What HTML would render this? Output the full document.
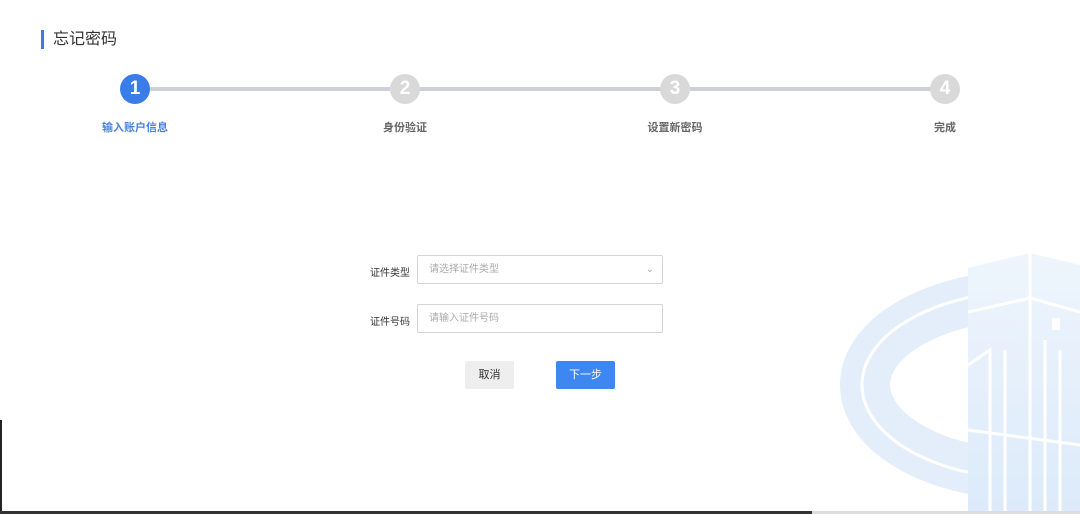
<!DOCTYPE html>
<html><head><meta charset="utf-8"><style>
*{margin:0;padding:0;box-sizing:border-box}
body{width:1080px;height:514px;background:#fff;position:relative;overflow:hidden;font-family:"Liberation Sans","Noto Sans CJK SC",sans-serif}
.a{position:absolute}
.title{left:41px;top:30px;font-size:16px;color:#333;line-height:19px;padding-left:9px;border-left:3px solid #3a7ce8}
.line{top:87px;height:4px;background:#cdd0d6}
.c{width:30px;height:30px;border-radius:50%;background:#d9d9d9;color:#fff;font-weight:bold;font-size:19px;text-align:center;line-height:30px;top:74px}
.lbl{top:119px;font-size:11px;color:#666;font-weight:bold;width:120px;text-align:center}
.fl{font-size:10px;color:#333}
.inp{border:1px solid #d5d5d5;width:246px;height:29px;left:417px;font-size:10px;color:#aaa;padding-left:11px;line-height:27px;border-radius:2px}
.btn{top:361px;height:28px;font-size:11px;text-align:center;line-height:28px;border-radius:2px}
</style></head><body>
<div class="a title">忘记密码</div>
<div class="a line" style="left:135px;width:810px"></div>
<div class="a c" style="left:120px;background:#3a7ce8">1</div>
<div class="a c" style="left:390px">2</div>
<div class="a c" style="left:660px">3</div>
<div class="a c" style="left:930px">4</div>
<div class="a lbl" style="left:75px;color:#4a82d8">输入账户信息</div>
<div class="a lbl" style="left:345px">身份验证</div>
<div class="a lbl" style="left:615px">设置新密码</div>
<div class="a lbl" style="left:885px">完成</div>
<svg class="a" style="left:780px;top:230px" width="300" height="284" viewBox="780 230 300 284">
<defs><linearGradient id="g" x1="0" y1="0" x2="0" y2="1"><stop offset="0" stop-color="#eef5fc"/><stop offset="1" stop-color="#dceafa"/></linearGradient></defs>
<ellipse cx="1030" cy="385" rx="165" ry="90" fill="none" stroke="#e4eefa" stroke-width="50"/>
<ellipse cx="1030" cy="385" rx="168" ry="94" fill="none" stroke="#fff" stroke-width="3"/>
<path d="M968 268 L1030 253 L1080 265 L1080 514 L968 514 Z" fill="url(#g)"/>
<path d="M968 312 L1030 298 L1080 312 M1030 253 L1030 514 M968 365 L990 350 L990 514 M1005 350 L1005 514 M1045 340 L1045 514 M1060 350 L1060 514 M968 430 L1080 445" fill="none" stroke="#fff" stroke-width="3"/>
<rect x="1052" y="318" width="8" height="12" fill="#fff"/>
</svg>
<div class="a fl" style="left:370px;top:264px">证件类型</div>
<div class="a inp" style="top:255px">请选择证件类型<span style="position:absolute;right:8px;top:0;color:#aaa;font-size:10px">&#8964;</span></div>
<div class="a fl" style="left:370px;top:313px">证件号码</div>
<div class="a inp" style="top:304px">请输入证件号码</div>
<div class="a btn" style="left:465px;width:49px;background:#eeeeee;color:#333">取消</div>
<div class="a btn" style="left:556px;width:59px;background:#3e86f0;color:#fff">下一步</div>
<div class="a" style="left:0;top:420px;width:2px;height:94px;background:#222"></div>
<div class="a" style="left:0;top:511px;width:812px;height:3px;background:#333"></div>
<div class="a" style="left:812px;top:511px;width:268px;height:3px;background:#ddd"></div>
</body></html>
